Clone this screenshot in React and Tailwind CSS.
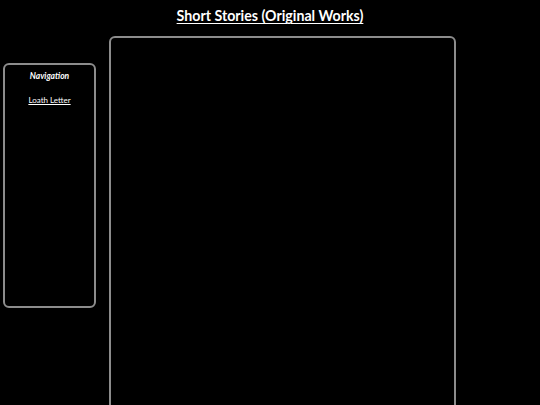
export default function App() {
    return (
        <div className="h-[405px] overflow-hidden bg-black text-white font-['Lato','Open_Sans',sans-serif]">
            {/* Header */}
            <h1 className="h-9 pt-[8px] text-center text-[14.2px] font-bold leading-4">
                <a href="#" className="underline underline-offset-2">Short Stories (Original Works)</a>
            </h1>

            <div className="flex items-start">
                {/* Sidebar */}
                <nav className="ml-[3px] mt-[27px] w-[93px] h-[245px] rounded-md border-2 border-[#8c8c8c] flex flex-col items-center">
                    <p className="mt-[5px] text-[8.5px] italic font-bold leading-3">Navigation</p>
                    <a href="#" className="mt-[12px] text-[8px] underline leading-3">Loath Letter</a>
                </nav>

                {/* Content */}
                <main className="ml-[13px] w-[347px] h-[400px] rounded-md border-2 border-[#8c8c8c]"></main>
            </div>
        </div>
    );
}
